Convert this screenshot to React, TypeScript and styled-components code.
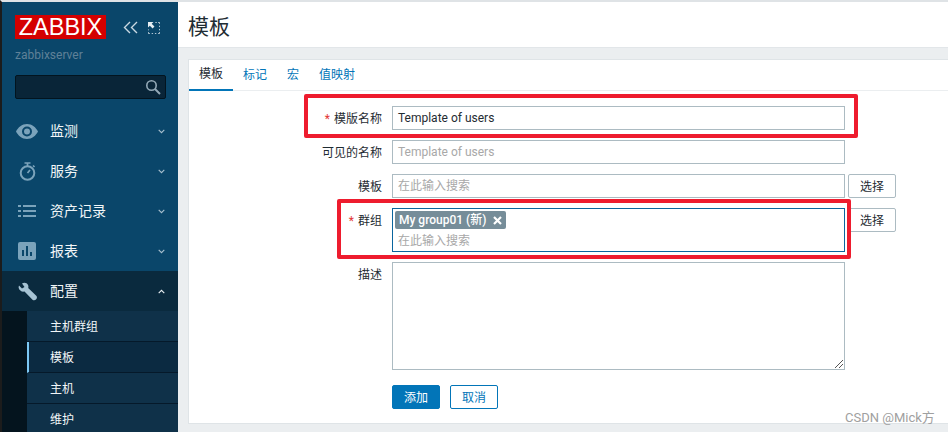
import React from "react";
import styled, { createGlobalStyle } from "styled-components";

const Global = createGlobalStyle`
  html, body { margin: 0; padding: 0; width: 948px; height: 432px; overflow: hidden; background: #fff; }
  * { box-sizing: border-box; }
  body { font-family: Roboto, "Liberation Sans", "Noto Sans CJK SC", sans-serif; font-size: 12px; color: #1f2c33; }
`;
const Page = styled.div`
  position: relative; display: flex; width: 948px; height: 432px; overflow: hidden;
  border-top: 2px solid #dfe3e6; border-left: 2px solid #1c1c1c;
`;
const Sidebar = styled.aside`
  width: 176px; flex: none; background: #0a466a; display: flex; flex-direction: column; color: #f2f6f8; min-height: 0;
`;
const Brand = styled.div`
  flex: none; display: flex; align-items: flex-start; padding: 13px 0 0 13px; height: 38px;
`;
const Logo = styled.div`
  width: 91px; height: 24px; background: #d40000; color: #fff; font: 23.5px/24px "Liberation Sans", sans-serif;
  text-align: center;
`;
const BrandIcons = styled.div`display: flex; align-items: center; gap: 10px; margin: 6px 0 0 17px;`;
const Server = styled.div`
  flex: none; padding: 8px 0 0 13px; height: 27px; font-size: 12px; line-height: 14px; color: #5f8198;
`;
const Search = styled.div`
  flex: none; margin: 8px 0 0 13px; width: 151px; height: 24px; border: 1px solid #02141f; border-radius: 2px; background: #092538;
  display: flex; align-items: center; justify-content: flex-end; padding-right: 4px;
`;
const Menu = styled.nav`flex: none; margin-top: 12px; display: flex; flex-direction: column;`;
const MenuItem = styled.div<{ $open?: boolean }>`
  height: 40px; display: flex; align-items: center; background: ${p => (p.$open ? "#0a2a3e" : "transparent")};
`;
const MenuIcon = styled.span`width: 48px; flex: none; display: flex; justify-content: center; padding-left: 10px; padding-right: 8px;`;
const MenuLabel = styled.span`
  flex: 1; padding-bottom: 2px; font: 14px/16px "Noto Sans CJK SC", sans-serif; color: #f2f6f8;
`;
const Chevron = styled.span`width: 17px; flex: none; margin-right: 8px; display: flex; justify-content: center;`;
const SubWrap = styled.div`display: flex; flex: 1; min-height: 0; overflow: hidden; background: #04141e;`;
const SubList = styled.div`margin-left: 25px; flex: 1; display: flex; flex-direction: column; background: #0f3149;`;
const SubItem = styled.div<{ $active?: boolean }>`
  height: 31px; flex: none; padding: 0 0 1px ${p => (p.$active ? "21px" : "23px")}; display: flex; align-items: center;
  border-bottom: 1px solid #05192a; font: 12px/14px "Noto Sans CJK SC", sans-serif; color: #f2f6f8;
  ${p => p.$active && "border-left: 2px solid #7cc8f4; background: #0b2a41;"}
`;
const Main = styled.main`flex: 1; display: flex; flex-direction: column; background: #ebeef0; min-width: 0;`;
const Header = styled.header`
  height: 46px; flex: none; background: #fff; padding: 9px 0 0 10px; border-bottom: 1px solid #e2e6e9;
  font: 21px/28px "Noto Sans CJK SC", sans-serif; color: #1f2c33;
`;
const Card = styled.section`
  margin: 11px 0 8px 10px; flex: 1; background: #fff; border: 1px solid #dfe4e7; border-right: none;
  display: flex; flex-direction: column;
`;
const Tabs = styled.div`display: flex; height: 31px; flex: none; border-bottom: 1px solid #ebeef0;`;
const Tab = styled.div<{ $active?: boolean }>`
  height: 31px; padding: 0 10px 4px; display: flex; align-items: center;
  font: 12px/14px "Noto Sans CJK SC", sans-serif;
  color: ${p => (p.$active ? "#1f2c33" : "#0275b8")};
  ${p => p.$active && "border-bottom: 2px solid #0275b8; width: 44px; justify-content: center;"}
`;
const Form = styled.div`
  display: grid; grid-template-columns: 193px 453px auto; column-gap: 10px; row-gap: 10px;
  padding-top: 15px; align-content: start; grid-auto-rows: min-content;
`;
const Label = styled.label`
  justify-self: end; height: 24px; overflow: visible; font: 12px/24px "Noto Sans CJK SC", sans-serif; color: #1f2c33; display: block;
`;
const Star = styled.span`color: #e33734; margin-right: 4px; font: 12px/12px Roboto, sans-serif;`;
const Field = styled.div<{ $ph?: boolean }>`
  height: 24px; border: 1px solid #acbbc2; padding: 0 5px; background: #fff; font-size: 12px; line-height: 22px;
  color: ${p => (p.$ph ? "#a8a8a8" : "#1f2c33")}; white-space: nowrap;
  font-family: Roboto, "Noto Sans CJK SC", sans-serif;
`;
const GroupBox = styled.div`
  height: 44px; border: 1px solid #0a659e; padding: 2px; background: #fff;
  display: flex; flex-direction: column; align-items: flex-start;
`;
const Chip = styled.span`
  height: 18px; width: 111px; background: #768d99; color: #fff; border-radius: 2px; padding: 0 4px; font: 12px/18px Roboto, "Noto Sans CJK SC", sans-serif;
  font-weight: 500; display: inline-flex; align-items: center; justify-content: space-between; white-space: nowrap;
`;
const ChipPh = styled.span`padding-left: 3px; margin-top: 2px; color: #a8a8a8; font: 12px/18px "Noto Sans CJK SC", sans-serif;`;
const TextArea = styled.div`
  position: relative; height: 108px; border: 1px solid #acbbc2; background: #fff;
`;
const Grip = styled.svg`position: absolute; right: 0; bottom: 0;`;
const SelectBtn = styled.div`
  width: 48px; height: 24px; margin-left: -7px; border: 1px solid #acbbc2; border-radius: 2px; background: #fff;
  font: 12px/22px "Noto Sans CJK SC", sans-serif; text-align: center; color: #1f2c33;
`;
const Actions = styled.div`display: flex; gap: 10px; grid-column: 2; margin-top: 5px;`;
const Btn = styled.div<{ $primary?: boolean }>`
  width: 48px; height: 24px; border: 1px solid #0275b8; border-radius: 2px;
  background: ${p => (p.$primary ? "#0275b8" : "#fff")}; color: ${p => (p.$primary ? "#fff" : "#0275b8")};
  font: 12px/22px "Noto Sans CJK SC", sans-serif; text-align: center;
`;
const RedBox = styled.div`
  position: absolute; border: 4px solid #ee1c2e; border-radius: 2px; pointer-events: none;
`;
const NameBox = styled(RedBox)`left: 302px; top: 92px; width: 554px; height: 44px;`;
const GroupMark = styled(RedBox)`left: 335px; top: 197px; width: 514px; height: 60px;`;
const Watermark = styled.div`
  position: absolute; left: 843px; top: 408px; font: 13px/16px Roboto, "Noto Sans CJK SC", sans-serif; color: #a0a0a0; white-space: nowrap;
`;

const down = (
  <svg width="7" height="5" viewBox="0 0 7 5" fill="none" stroke="#a9c0cf" strokeWidth="1.1"><path d="M.7.8l2.800 2.800L6.300.8" /></svg>
);
const up = (
  <svg width="7" height="5" viewBox="0 0 7 5" fill="none" stroke="#e8eef2" strokeWidth="1.1"><path d="M.7 4.200l2.800-2.800 2.800 2.800" /></svg>
);
const ic = "#7ba3bb";

export default function App() {
  return (
    <>
      <Global />
      <Page>
        <Sidebar>
          <Brand>
            <Logo>ZABBIX</Logo>
            <BrandIcons>
              <svg width="15" height="13" viewBox="0 0 15 13" fill="none" stroke="#c9d8e2" strokeWidth="1.4"><path d="M7 1L1.500 6.500 7 12M14 1L8.500 6.500 14 12" /></svg>
              <svg width="12" height="12" viewBox="0 0 13 13" fill="none"><path d="M8 .5h1.500M11 .5h1.500V2M12.500 4v1.500M12.500 7.500V9M12.500 11v1.500H11M9 12.500H7.500M5.500 12.500H4M2 12.500H.5V11M.5 9V8" stroke="#c9d8e2" /><path d="M0 0h6L4 2l3 3-2 2-3-3-2 2z" fill="#e6eef3" /></svg>
            </BrandIcons>
          </Brand>
          <Server>zabbixserver</Server>
          <Search>
            <svg width="16" height="16" viewBox="0 0 16 16" fill="none" stroke="#93a9b7" strokeWidth="1.6"><circle cx="6.500" cy="6.500" r="4.700" /><path d="M10 10l5 5" strokeWidth="2" /></svg>
          </Search>
          <Menu>
            <MenuItem>
              <MenuIcon>
                <svg width="22" height="15" viewBox="0 0 22 15"><path fillRule="evenodd" fill={ic} d="M11 0c5 0 9 3.500 11 7.500C20 11.500 16 15 11 15S2 11.500 0 7.500C2 3.500 6 0 11 0zm0 2.500a5 5 0 100 10 5 5 0 000-10zm0 2a3 3 0 110 6 3 3 0 010-6z" /></svg>
              </MenuIcon>
              <MenuLabel>监测</MenuLabel>
              <Chevron>{down}</Chevron>
            </MenuItem>
            <MenuItem>
              <MenuIcon>
                <svg width="17" height="19" viewBox="0 0 17 19" fill="none" stroke={ic} strokeWidth="2"><circle cx="8.500" cy="11" r="6.800" /><path d="M5.500 1h6M8.500 1v3M8.500 11l2.500-3M14 3.500l1.500 1.500" strokeWidth="1.700" /></svg>
              </MenuIcon>
              <MenuLabel>服务</MenuLabel>
              <Chevron>{down}</Chevron>
            </MenuItem>
            <MenuItem>
              <MenuIcon>
                <svg width="18" height="12" viewBox="0 0 18 12" fill={ic}><path d="M0 0h3v2H0zM5 0h13v2H5zM0 5h3v2H0zM5 5h13v2H5zM0 10h3v2H0zM5 10h13v2H5z" /></svg>
              </MenuIcon>
              <MenuLabel>资产记录</MenuLabel>
              <Chevron>{down}</Chevron>
            </MenuItem>
            <MenuItem>
              <MenuIcon>
                <svg width="18" height="18" viewBox="0 0 18 18"><rect width="18" height="18" rx="2" fill={ic} /><path d="M4 8h2v6H4zM8 4h2v10H8zM12 10h2v4h-2z" fill="#0a466a" /></svg>
              </MenuIcon>
              <MenuLabel>报表</MenuLabel>
              <Chevron>{down}</Chevron>
            </MenuItem>
            <MenuItem $open>
              <MenuIcon>
                <svg width="19" height="19" viewBox="0 0 19 19"><path fill="#a6c3d4" d="M1 3.500L4 6.500 6.500 5 4 1.500C6 0 9 .5 10 3c.5 1 .5 2 .2 3L18.500 14c.8 1 .5 2.500-.5 3.500s-2.500 1-3.500.2L6.500 9.500C4 10.200 1.200 8.500.7 6 .5 5.200.7 4.300 1 3.500z" /></svg>
              </MenuIcon>
              <MenuLabel>配置</MenuLabel>
              <Chevron>{up}</Chevron>
            </MenuItem>
          </Menu>
          <SubWrap>
            <SubList>
              <SubItem>主机群组</SubItem>
              <SubItem $active>模板</SubItem>
              <SubItem>主机</SubItem>
              <SubItem>维护</SubItem>
            </SubList>
          </SubWrap>
        </Sidebar>
        <Main>
          <Header>模板</Header>
          <Card>
            <Tabs>
              <Tab $active>模板</Tab>
              <Tab>标记</Tab>
              <Tab>宏</Tab>
              <Tab>值映射</Tab>
            </Tabs>
            <Form>
              <Label><Star>*</Star>模版名称</Label>
              <Field>Template of users</Field>
              <span />
              <Label>可见的名称</Label>
              <Field $ph>Template of users</Field>
              <span />
              <Label>模板</Label>
              <Field $ph>在此输入搜索</Field>
              <SelectBtn>选择</SelectBtn>
              <Label><Star>*</Star>群组</Label>
              <GroupBox>
                <Chip>
                  My group01 (新)
                  <svg width="9" height="9" viewBox="0 0 9 9" stroke="#fff" strokeWidth="2.200"><path d="M1 1l7 7M8 1L1 8" /></svg>
                </Chip>
                <ChipPh>在此输入搜索</ChipPh>
              </GroupBox>
              <SelectBtn>选择</SelectBtn>
              <Label>描述</Label>
              <TextArea>
                <Grip width="10" height="10" viewBox="0 0 10 10" stroke="#555" strokeWidth="1"><path d="M1 9l8-8M5 9l4-4" /></Grip>
              </TextArea>
              <span />
              <span />
              <Actions>
                <Btn $primary>添加</Btn>
                <Btn>取消</Btn>
              </Actions>
            </Form>
          </Card>
        </Main>
        <NameBox />
        <GroupMark />
        <Watermark>CSDN @Mick方</Watermark>
      </Page>
    </>
  );
}
